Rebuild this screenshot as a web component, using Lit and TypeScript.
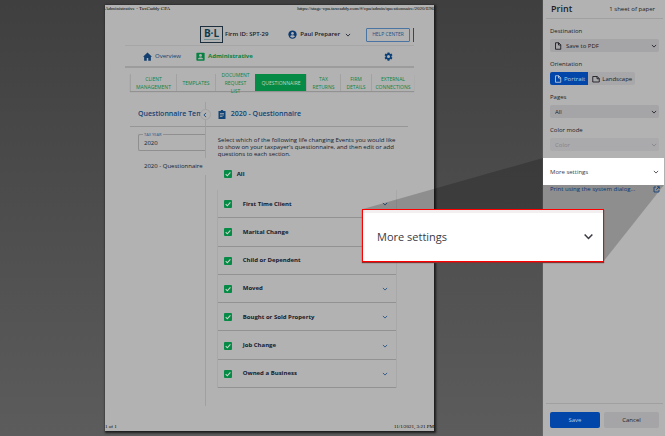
import { LitElement, html, css } from "lit";
import { customElement, property } from "lit/decorators.js";
import { classMap } from "lit/directives/class-map.js";

const chevron = html`<svg class="chev" viewBox="0 0 10 10" aria-hidden="true">
  <path d="M1.5 3.2 5 6.8 8.5 3.2" fill="none" stroke="currentColor" stroke-width="1.4" />
</svg>`;

const pageIcon = html`<svg class="page-icon" viewBox="0 0 16 16" aria-hidden="true">
  <path d="M3 1.5h6.5L13.5 5.5v9H3z M9 1.5v4.5h4.5" fill="none" stroke="currentColor" stroke-width="1.8" stroke-linejoin="round" />
</svg>`;

const landscapeIcon = html`<svg class="page-icon" viewBox="0 0 16 16" aria-hidden="true">
  <path d="M1.5 3h9L14.5 7v7h-13z M10 3v4.500h4.500" fill="none" stroke="currentColor" stroke-width="1.8" stroke-linejoin="round" />
</svg>`;

const EVENTS = [
  "First Time Client",
  "Marital Change",
  "Child or Dependent",
  "Moved",
  "Bought or Sold Property",
  "Job Change",
  "Owned a Business",
];

const TABS = [
  ["CLIENT", "MANAGEMENT"],
  ["TEMPLATES"],
  ["DOCUMENT", "REQUEST", "LIST"],
  ["QUESTIONNAIRE"],
  ["TAX", "RETURNS"],
  ["FIRM", "DETAILS"],
  ["EXTERNAL", "CONNECTIONS"],
];

const controls = css`
  * {
    box-sizing: border-box;
  }
  button,
  select,
  input {
    font: inherit;
    color: inherit;
    margin: 0;
    padding: 0;
    border: 0;
    background: none;
    border-radius: 0;
    appearance: none;
  }
  svg {
    display: block;
    flex: none;
  }
  .chev {
    width: 6px;
    height: 6px;
  }
`;

@customElement("event-check")
export class EventCheck extends LitElement {
  @property() label = "";

  static styles = [
    controls,
    css`
      label {
        display: flex;
        align-items: center;
        gap: 11px;
        font-weight: 700;
      }
      :host([compact]) label {
        gap: 5px;
      }
      .box {
        display: grid;
        width: 8px;
        height: 8px;
      }
      input,
      .tick {
        grid-area: 1 / 1;
        width: 8px;
        height: 8px;
      }
      input {
        border-radius: 1px;
        background: #058b45;
      }
      .tick {
        pointer-events: none;
        z-index: 1;
      }
    `,
  ];

  render() {
    return html`<label>
      <span class="box">
        <input type="checkbox" checked />
        <svg class="tick" viewBox="0 0 8 8" aria-hidden="true">
          <path d="M1.7 4.2 3.3 5.8 6.4 2.4" fill="none" stroke="#c4d8c9" stroke-width="1.1" />
        </svg>
      </span>
      <span>${this.label}</span>
    </label>`;
  }
}

@customElement("preview-sheet")
export class PreviewSheet extends LitElement {
  static styles = [
    controls,
    css`
      :host {
        display: flex;
        flex-direction: column;
        background: #b2b2b2;
        box-shadow: 1px 1px 2px 1px #1c1c1c;
        font: 6px/7px "Open Sans", "Noto Sans", sans-serif;
        color: #14202e;
      }
      .running {
        display: flex;
        justify-content: space-between;
        font: 5px/8px "Liberation Serif", serif;
        color: #000;
        white-space: nowrap;
      }
      .site {
        flex: 1;
        display: flex;
        flex-direction: column;
        margin: 0 20px;
      }
      .top {
        display: flex;
        align-items: center;
        height: 33px;
        padding: 11px 0 0 75px;
        border-bottom: 1px solid #a6a6a6;
        font-weight: 600;
        white-space: nowrap;
      }
      .logo {
        width: 23px;
        height: 17px;
        border: 1px solid #1d2f3c;
        display: flex;
        flex-direction: column;
        align-items: center;
        color: #0f3a4c;
        font: 700 10px/12px "Open Sans", sans-serif;
      }
      .logo::after {
        content: "";
        width: 16px;
        border-top: 1px solid #6f9296;
      }
      .firm {
        margin-left: 2px;
      }
      .user {
        display: flex;
        align-items: center;
        gap: 3px;
        margin-left: 20px;
      }
      .user .round {
        width: 9px;
        height: 9px;
        color: #0b3a72;
      }
      .user .chev {
        margin-left: 2px;
      }
      .help {
        margin-left: auto;
        height: 14px;
        width: 44px;
        border: 1px solid #4a75a3;
        border-radius: 1px;
        color: #1f5387;
        font: 5px/7px "Open Sans", sans-serif;
      }
      .scroll {
        width: 1px;
        height: 14px;
        margin-left: 3px;
        background: #444;
      }
      nav.main {
        display: flex;
        align-items: center;
        height: 22px;
        padding: 0 21px 0 18px;
        border-bottom: 2px solid #9c9c9c;
      }
      a {
        color: inherit;
        text-decoration: none;
      }
      .main a {
        display: flex;
        align-items: center;
        gap: 3px;
        color: #123f70;
      }
      .main .admin {
        margin-left: 15px;
        color: #078243;
        font-weight: 700;
      }
      .main svg {
        width: 9px;
        height: 9px;
      }
      .gear {
        margin-left: auto;
        color: #0b3f77;
      }
      .tabs {
        display: grid;
        grid-template-columns: 46fr 39fr 40fr 51fr 34fr 31fr 43fr;
        grid-template-rows: 17px;
        margin: 6px 0 0 5px;
        box-shadow: 0 1px 1px #929292;
      }
      .tabs a {
        display: flex;
        flex-direction: column;
        align-items: center;
        justify-content: center;
        border-left: 1px solid #a2a2a2;
        color: #0b8446;
        font-size: 5px;
        line-height: 8px;
      }
      .tabs .current {
        background: #058b45;
        border-color: #058b45;
        color: #bfd8c8;
      }
      .body {
        flex: 1;
        display: grid;
        grid-template-columns: 76fr 203fr;
        grid-template-rows: 25px 1fr;
        margin: 11px 6px 17px 5px;
      }
      h2 {
        margin: 0;
        font-size: 7px;
        line-height: 8px;
        font-weight: 600;
        color: #114477;
        white-space: nowrap;
        display: flex;
        align-items: center;
        border-bottom: 1px solid #969696;
      }
      .side-title {
        padding-left: 8px;
        border-right: 1px solid #a0a0a0;
        position: relative;
      }
      .collapse {
        position: absolute;
        right: -6px;
        top: 7px;
        width: 11px;
        height: 11px;
        display: grid;
        place-items: center;
        border-radius: 50%;
        background: #b2b2b2;
        border: 1px solid #a4a4a4;
      }
      .collapse .chev {
        transform: rotate(90deg);
      }
      .detail-title {
        padding-left: 12px;
        gap: 5px;
      }
      .detail-title svg {
        width: 8px;
        height: 9px;
      }
      .side {
        border-right: 1px solid #a0a0a0;
        padding: 5px 0 0 8px;
      }
      .year {
        display: block;
        margin: 0;
        padding: 0 0 0 5px;
        height: 19px;
        border: 1px solid #8f8f8f;
        border-right: 0;
        border-radius: 2px 0 0 2px;
      }
      .year legend {
        padding: 0 1px;
        margin-left: -1px;
        font-size: 4px;
        line-height: 5px;
        color: #29588a;
      }
      .year input {
        display: block;
        width: 100%;
        height: 12px;
        font-size: 6px;
      }
      .item {
        display: flex;
        align-items: center;
        height: 17px;
        margin: 7px -1px 0 0;
        padding-left: 6px;
        background: #b2b2b2;
        position: relative;
        white-space: nowrap;
      }
      .detail {
        display: flex;
        flex-direction: column;
        padding: 10px 0 18px 12px;
      }
      .detail p {
        margin: 0;
        white-space: nowrap;
      }
      .all {
        padding: 12px 6px;
      }
      .events {
        flex: 1;
        list-style: none;
        margin: 0 11px 0 -1px;
        padding: 0;
        display: grid;
        grid-auto-rows: 1fr;
      }
      .events li {
        display: flex;
        align-items: center;
        justify-content: space-between;
        padding: 0 8px 0 6px;
        border: solid #a8a8a8;
        border-width: 0 1px;
        box-shadow: inset 0 -1px 0 #929292;
      }
      .events button {
        color: #1e4f83;
      }
    `,
  ];

  render() {
    return html`
      <div class="running">
        <span>Administrative - TaxCaddy CPA</span>
        <span>https://stage-cpa.taxcaddy.com/#/cpa/admin/questionnaire/2020/E96</span>
      </div>
      <div class="site">
        <header class="top">
          <div class="logo">B·L</div>
          <span class="firm">Firm ID: SPT-29</span>
          <button class="user">
            <svg class="round" viewBox="0 0 24 24" aria-hidden="true">
              <circle cx="12" cy="12" r="11" fill="currentColor" />
              <circle cx="12" cy="9" r="3.6" fill="#b2b2b2" />
              <path d="M5.5 17.5c1-5 12-5 13 0-3.5 4-9.5 4-13 0z" fill="#b2b2b2" />
            </svg>
            Paul Preparer ${chevron}
          </button>
          <button class="help">HELP CENTER</button>
          <span class="scroll"></span>
        </header>
        <nav class="main">
          <a href="#overview">
            <svg viewBox="0 0 24 24" aria-hidden="true">
              <path d="M12 1 0 12.5h3V23h7v-7h4v7h7V12.5h3z" fill="currentColor" />
            </svg>
            Overview
          </a>
          <a href="#administrative" class="admin">
            <svg viewBox="0 0 24 24" aria-hidden="true">
              <rect x="1" y="2" width="22" height="21" rx="2" fill="currentColor" />
              <circle cx="12" cy="9" r="3.8" fill="#b2b2b2" />
              <path d="M5 19c0-6 14-6 14 0z" fill="#b2b2b2" />
            </svg>
            Administrative
          </a>
          <button class="gear" aria-label="Settings">
            <svg viewBox="0 0 24 24" aria-hidden="true">
              <path
                fill="currentColor"
                fill-rule="evenodd"
                d="M9.5 1h5l.6 3.200 1.900 1.100 3-1.100 2.500 4.300L20 10.700v2.600l2.500 2.200-2.500 4.300-3-1.100-1.900 1.100-.6 3.200h-5l-.6-3.200L7 18.700l-3 1.100-2.500-4.300L4 13.300v-2.600L1.500 8.500 4 4.200l3 1.100 1.900-1.100zM12 8a4 4 0 1 0 0 8 4 4 0 0 0 0-8z"
              />
            </svg>
          </button>
        </nav>
        <nav class="tabs">
          ${TABS.map(
            (lines) => html`<a href="#tab" class=${classMap({ current: lines[0] === "QUESTIONNAIRE" })}>
              ${lines.map((l) => html`<span>${l}</span>`)}
            </a>`
          )}
        </nav>
        <div class="body">
          <h2 class="side-title">
            <span>Questionnaire Tem</span>
            <button class="collapse" aria-label="Collapse">${chevron}</button>
          </h2>
          <h2 class="detail-title">
            <svg viewBox="0 0 16 18" aria-hidden="true">
              <path d="M1 2h4.5a2.5 2.5 0 0 1 5 0H15v16H1z" fill="currentColor" />
              <path d="M4 7h8M4 10h8M4 13h5" stroke="#b2b2b2" stroke-width="1.5" />
            </svg>
            2020 - Questionnaire
          </h2>
          <aside class="side">
            <fieldset class="year">
              <legend><label for="year">TAX YEAR</label></legend>
              <input id="year" value="2020" />
            </fieldset>
            <a class="item" href="#questionnaire">2020 - Questionnaire</a>
          </aside>
          <section class="detail">
            <p>
              Select which of the following life changing Events you would like<br />
              to show on your taxpayer's questionnaire, and then edit or add<br />
              questions to each section.
            </p>
            <event-check class="all" compact label="All"></event-check>
            <ul class="events">
              ${EVENTS.map(
                (e) => html`<li>
                  <event-check label=${e}></event-check>
                  <button aria-label="Expand ${e}">${chevron}</button>
                </li>`
              )}
            </ul>
          </section>
        </div>
      </div>
      <div class="running">
        <span>1 of 1</span>
        <span>11/1/2021, 3:21 PM</span>
      </div>
    `;
  }
}

@customElement("print-panel")
export class PrintPanel extends LitElement {
  static styles = [
    controls,
    css`
      :host {
        display: flex;
        flex-direction: column;
        background: #b2b2b2;
        font: 6px/8px "Open Sans", "Noto Sans", sans-serif;
        color: #1d1d24;
      }
      header {
        display: flex;
        align-items: center;
        justify-content: space-between;
        height: 19px;
        margin: 0 2px 0 3px;
        padding: 0 8px 0 5px;
        border-bottom: 1px solid #a0a0a0;
      }
      h1 {
        margin: 0;
        font-size: 9px;
        line-height: 12px;
        font-weight: 600;
      }
      .field {
        display: flex;
        flex-direction: column;
        gap: 4px;
        margin: 8px 6px 0 7px;
      }
      .pick {
        display: grid;
        align-items: center;
        height: 13px;
        border-radius: 2px;
        background: #a5a5a8;
      }
      .pick > * {
        grid-area: 1 / 1;
      }
      .pick select {
        width: 100%;
        height: 13px;
        padding-left: 5px;
      }
      .pick.icon select {
        padding-left: 16px;
      }
      .pick .chev {
        justify-self: end;
        margin-right: 2px;
        pointer-events: none;
      }
      .page-icon {
        width: 8px;
        height: 8px;
      }
      .pick .page-icon {
        margin-left: 4px;
      }
      .off {
        color: #85858a;
        background: #aaaaac;
      }
      .off select {
        opacity: 1;
      }
      .toggle {
        display: flex;
      }
      .toggle button {
        display: flex;
        align-items: center;
        gap: 2px;
        height: 13px;
        padding: 0 3px 0 4px;
        border-radius: 0 2px 2px 0;
        background: #a8a8ab;
      }
      .toggle .on {
        border-radius: 2px 0 0 2px;
        background: #0146a8;
        color: #b9c9e0;
      }
      .more {
        position: relative;
        margin: 7px 1px 0 0;
      }
      .beam {
        position: absolute;
        right: 0;
        top: 0;
        width: 301px;
        height: 104px;
        z-index: 1;
        pointer-events: none;
      }
      .row,
      .callout {
        display: flex;
        align-items: center;
        justify-content: space-between;
        background: #fff;
        color: #3a3a42;
      }
      .row {
        position: relative;
        z-index: 2;
        width: 100%;
        height: 27px;
        padding: 0 5px 0 7px;
      }
      .callout {
        position: absolute;
        z-index: 3;
        right: 60px;
        top: 51px;
        width: 242px;
        height: 53px;
        padding: 2px 9px 0 14px;
        border: 1px solid #f00;
        box-shadow: 0 1px 1px #8a3030, inset 0 3px 0 #f3eef0;
        font-size: 11px;
      }
      .callout .chev {
        width: 11px;
        height: 11px;
      }
      .system {
        display: flex;
        justify-content: space-between;
        align-items: center;
        margin: 0 5px 0 7px;
        color: #0b4793;
        text-decoration: none;
      }
      .system svg {
        width: 7px;
        height: 7px;
      }
      footer {
        display: grid;
        grid-template-columns: 50fr 55fr;
        gap: 4px;
        margin: auto 2px 0 3px;
        padding: 8px 4px 8px 4px;
        border-top: 1px solid #a0a0a0;
      }
      footer button {
        height: 16px;
        border-radius: 2px;
        background: #a5a5a8;
      }
      footer .save {
        background: #0146a8;
        color: #b9c9e0;
      }
    `,
  ];

  render() {
    return html`
      <header>
        <h1>Print</h1>
        <span>1 sheet of paper</span>
      </header>
      <div class="field">
        <label for="dest">Destination</label>
        <div class="pick icon">
          <select id="dest"><option>Save to PDF</option></select>
          ${pageIcon} ${chevron}
        </div>
      </div>
      <div class="field">
        <span id="orient">Orientation</span>
        <div class="toggle" role="group" aria-labelledby="orient">
          <button class="on">${pageIcon}Portrait</button>
          <button>${landscapeIcon}Landscape</button>
        </div>
      </div>
      <div class="field">
        <label for="pages">Pages</label>
        <div class="pick">
          <select id="pages"><option>All</option></select>
          ${chevron}
        </div>
      </div>
      <div class="field">
        <label for="color">Color mode</label>
        <div class="pick off">
          <select id="color" disabled><option>Color</option></select>
          ${chevron}
        </div>
      </div>
      <div class="more">
        <svg class="beam" viewBox="0 0 301 104" aria-hidden="true">
          <path d="M180 0 0 51 L240 104 301 27z" fill="#000" fill-opacity="0.2" />
        </svg>
        <button class="row">More settings ${chevron}</button>
        <button class="callout">More settings ${chevron}</button>
      </div>
      <a class="system" href="#system-dialog">
        Print using the system dialog...
        <svg viewBox="0 0 14 14" aria-hidden="true">
          <path d="M6 2H2v10h10V8M8 1.5h4.5V6M12.5 1.5 6.5 7.5" fill="none" stroke="currentColor" stroke-width="1.6" />
        </svg>
      </a>
      <footer>
        <button class="save">Save</button>
        <button>Cancel</button>
      </footer>
    `;
  }
}

@customElement("app-root")
export class AppRoot extends LitElement {
  static styles = css`
    :host {
      display: grid;
      grid-template-columns: 1fr 122px;
      min-height: 100vh;
      background: linear-gradient(#3f3f40, #5c5c5c);
    }
    .stage {
      display: flex;
      justify-content: center;
      padding: 5px 4px 5px 0;
    }
    preview-sheet {
      width: 61%;
      min-width: 329px;
    }
    print-panel {
      box-shadow: 0 0 1px #999;
    }
  `;

  render() {
    return html`
      <main class="stage"><preview-sheet></preview-sheet></main>
      <print-panel></print-panel>
    `;
  }
}
